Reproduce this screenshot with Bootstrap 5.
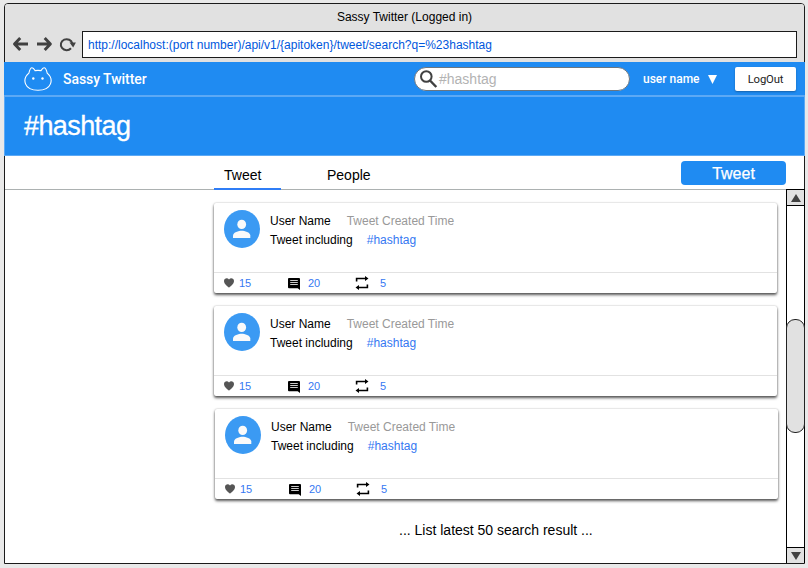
<!DOCTYPE html>
<html lang="en">
<head>
<meta charset="utf-8">
<title>Sassy Twitter</title>
<link rel="stylesheet" href="https://cdn.jsdelivr.net/npm/bootstrap@5.3.0/dist/css/bootstrap.min.css">
<style>
body{background:#e9e9e9;font-family:"Liberation Sans",Arial,sans-serif;font-size:12px;line-height:18px;color:#000;width:808px;height:568px;overflow:hidden;padding:3px 3px 4px 4px}
svg{display:block;flex:none}
.window{width:801px;height:561px;background:#fff;border:1px solid #1b1b1b;border-radius:4px 4px 0 0}
.chrome{height:58px;background:#e1e1e1;border-radius:3px 3px 0 0}
.window-title{height:27px;line-height:26px}
.address{width:715px;height:27px;background:#fff;border:1px solid #1b1b1b;line-height:26px;padding-left:5px;color:#0057dd}
.topbar{height:34px;background:#1f8bf2;color:#fff;margin:0 -1px;padding-left:20px}
.brand{font:500 14px/34px Roboto,sans-serif;letter-spacing:-.06px;width:351px;margin-left:11px}
.search{width:216px;height:24px;background:#fff;border:1px solid #6b7680;border-radius:12px;padding-left:5px;font-size:14px;color:#b3b3b3}
.account{font:500 12px/34px Roboto,sans-serif;margin-left:13px;width:65px}
.logout{width:61px;height:24px;background:#fff;border:0;border-radius:2px;font:400 11.3px/25px Roboto,sans-serif;letter-spacing:-.15px;color:#222;box-shadow:0 1px 2px rgba(0,0,0,.3);margin-left:18px}
.hero{height:61px;background:#1f8bf2;border:1px solid #5ca9f5;border-top-width:2px;margin:-1px -1px 0;padding-left:19px;font-size:27px;line-height:58px;color:#fff;letter-spacing:-.6px;-webkit-text-stroke:.3px #fff}
.tabs{height:34px;border-bottom:1px solid #acb1b1;padding-left:209px;font-size:14px;line-height:38px}
.tab-item{height:34px;width:67px;padding-left:10px}
.tab-item.active{border-bottom:2px solid #2f7df6}
.tab-item.people{margin-left:26px;padding-left:20px}
.compose{width:105px;height:24px;background:#1f8bf2;color:#fff;border:0;border-radius:4px;font-size:16px;line-height:25px;margin:5px 18px 0 auto;-webkit-text-stroke:.25px #fff}
.view{height:374px;margin-top:-1px}
.feed{padding:14px 0 0 209px}
.tweet{width:563px;height:90px;margin-bottom:13px;background:#fff;border-radius:2px;box-shadow:0 2px 3px rgba(0,0,0,.65),0 0 2px rgba(0,0,0,.25)}
.tweet:nth-child(3){margin-left:1px}
.tweet-main{height:70px;border-bottom:1px solid #e2e2e2;padding:7px 10px 0}
.copy{padding:2px 0 0 10px;line-height:19px}
.time{color:#999;margin-left:16px}
.tag{color:#3578f2;margin-left:14px}
.stats{height:20px;font-size:11px;line-height:21px;color:#3578f2;padding-left:10px}
.stat{width:64px}
.stat:nth-child(2){width:67px}
.stat:nth-child(2) svg{margin-top:1px}
.stat span{margin-left:8px}
.stat:first-child span{margin-left:5px}
.stat:last-child span{margin-left:11px}
.more{font-size:14px;padding:9px 0 0 185px;letter-spacing:0}
.rail{width:19px;margin-right:-1px;border:1px solid #000;border-width:1px 1px 0;background:#fff}
.step{height:16px;background:#e1e1e1;border-bottom:1px solid #000}
.step.down{border:0;border-top:1px solid #000;margin-top:auto;height:16px}
.thumb{width:19px;height:114px;margin:113px -1px 0;background:#e1e1e1;border:1px solid #222;border-radius:9px}
</style>
<script src="https://cdn.jsdelivr.net/npm/bootstrap@5.3.0/dist/js/bootstrap.bundle.min.js"></script>
</head>
<body>
<svg width="0" height="0" class="position-absolute">
<symbol id="person" viewBox="0 0 36 38"><ellipse cx="18" cy="19" rx="18" ry="19" fill="#3b9af3"/><ellipse cx="17.7" cy="14.4" rx="4.4" ry="4.7" fill="#fafafa"/><path fill="#fafafa" d="M9 28v-2.500c0-3.300 5.800-4.800 8.700-4.800s8.600 1.500 8.600 4.800V28z"/></symbol>
<symbol id="heart" viewBox="0 0 10 10"><path fill="#555" d="M5 9.700C3.500 8.500 0 6.100 0 3.100 0 .1 3.500-.6 5 1.400 6.500-.6 10 .1 10 3.100c0 3-3.500 5.400-5 6.600z"/></symbol>
<symbol id="comment" viewBox="0 0 12 12"><path d="M1 0h10Q12 0 12 1V12L9.700 10.300H1Q0 10.300 0 9.300V1Q0 0 1 0z"/><path fill="none" stroke="#ccc" stroke-width="1.100" d="M2.200 2.500h7.600M2.200 4.500h7.600M2.200 6.500h7.600"/></symbol>
<symbol id="repeat" viewBox="0 0 14 14"><path fill="none" stroke="#000" stroke-width="1.600" d="M1.600 5.500V2.500h9.400M12.400 8.500v3H3"/><path d="M10 0l3.500 2.500L10 5zM4 9v5L.5 11.500z"/></symbol>
</svg>
<div class="window d-flex flex-column">
<div class="chrome">
<div class="window-title text-center">Sassy Twitter (Logged in)</div>
<div class="d-flex">
<svg width="77" height="27" fill="none" stroke="#414141" stroke-width="2.900" stroke-linejoin="round"><path d="M23 13H10M15.200 7L9.500 13l5.700 6M32 13h13.500M39.700 7l5.700 6-5.700 6"/><path stroke-width="2" d="M66 17.300A5.800 5.500 0 1 1 67.300 12.500"/><path fill="#414141" stroke="none" d="M64.500 11.500h6.400L68.200 16.500z"/></svg>
<div class="address">http://localhost:(port number)/api/v1/{apitoken}/tweet/search?q=%23hashtag</div>
</div>
</div>
<div class="topbar d-flex align-items-center">
<svg width="28" height="24" viewBox="0 0 28 24" fill="none" stroke="#fff" stroke-width="1.100"><path d="M4.900 6.200C5.500 3.500 7 .8 8 .8c1.200 0 2.200 1.300 3 2.800q3-.5 6 0C18 2 19 .8 20 .8c1.200 0 2.600 2.500 3.200 5.400C30 12 28.200 23.300 14 23.300S-2 12 4.900 6.200z"/><g fill="#fff" stroke="none"><circle cx="9.300" cy="11.500" r="1.200"/><circle cx="18.500" cy="11.500" r="1.200"/></g></svg>
<div class="brand">Sassy Twitter</div>
<div class="search d-flex align-items-center"><svg width="19" height="20" fill="none" stroke="#414141"><circle cx="6.300" cy="7.500" r="5.300" stroke-width="2"/><path d="M10 11.500l6.300 6.500" stroke-width="2.500"/></svg><span>#hashtag</span></div>
<span class="account">user name</span>
<svg width="9" height="9"><path fill="#fff" d="M0 0h9L4.500 9z"/></svg>
<button class="logout p-0">LogOut</button>
</div>
<div class="hero">#hashtag</div>
<div class="tabs d-flex"><div class="tab-item active">Tweet</div><div class="tab-item people">People</div><button class="compose p-0">Tweet</button></div>
<div class="view d-flex">
<div class="feed flex-grow-1">
<div class="tweet"><div class="tweet-main d-flex"><svg width="36" height="38"><use href="#person"/></svg><div class="copy"><div>User Name<span class="time">Tweet Created Time</span></div><div>Tweet including<span class="tag">#hashtag</span></div></div></div>
<div class="stats d-flex"><div class="stat d-flex align-items-center"><svg width="10" height="10"><use href="#heart"/></svg><span>15</span></div><div class="stat d-flex align-items-center"><svg width="12" height="12"><use href="#comment"/></svg><span>20</span></div><div class="stat d-flex align-items-center"><svg width="14" height="14"><use href="#repeat"/></svg><span>5</span></div></div></div>
<div class="tweet"><div class="tweet-main d-flex"><svg width="36" height="38"><use href="#person"/></svg><div class="copy"><div>User Name<span class="time">Tweet Created Time</span></div><div>Tweet including<span class="tag">#hashtag</span></div></div></div>
<div class="stats d-flex"><div class="stat d-flex align-items-center"><svg width="10" height="10"><use href="#heart"/></svg><span>15</span></div><div class="stat d-flex align-items-center"><svg width="12" height="12"><use href="#comment"/></svg><span>20</span></div><div class="stat d-flex align-items-center"><svg width="14" height="14"><use href="#repeat"/></svg><span>5</span></div></div></div>
<div class="tweet"><div class="tweet-main d-flex"><svg width="36" height="38"><use href="#person"/></svg><div class="copy"><div>User Name<span class="time">Tweet Created Time</span></div><div>Tweet including<span class="tag">#hashtag</span></div></div></div>
<div class="stats d-flex"><div class="stat d-flex align-items-center"><svg width="10" height="10"><use href="#heart"/></svg><span>15</span></div><div class="stat d-flex align-items-center"><svg width="12" height="12"><use href="#comment"/></svg><span>20</span></div><div class="stat d-flex align-items-center"><svg width="14" height="14"><use href="#repeat"/></svg><span>5</span></div></div></div>
<div class="more">... List latest 50 search result ...</div>
</div>
<div class="rail d-flex flex-column"><div class="step d-flex justify-content-center align-items-center"><svg width="10" height="8"><path fill="#414141" d="M0 8L5 0l5 8z"/></svg></div><div class="thumb"></div><div class="step down d-flex justify-content-center align-items-center"><svg width="10" height="8"><path fill="#414141" d="M0 0h10L5 8z"/></svg></div></div>
</div>
</div>
</body>
</html>
